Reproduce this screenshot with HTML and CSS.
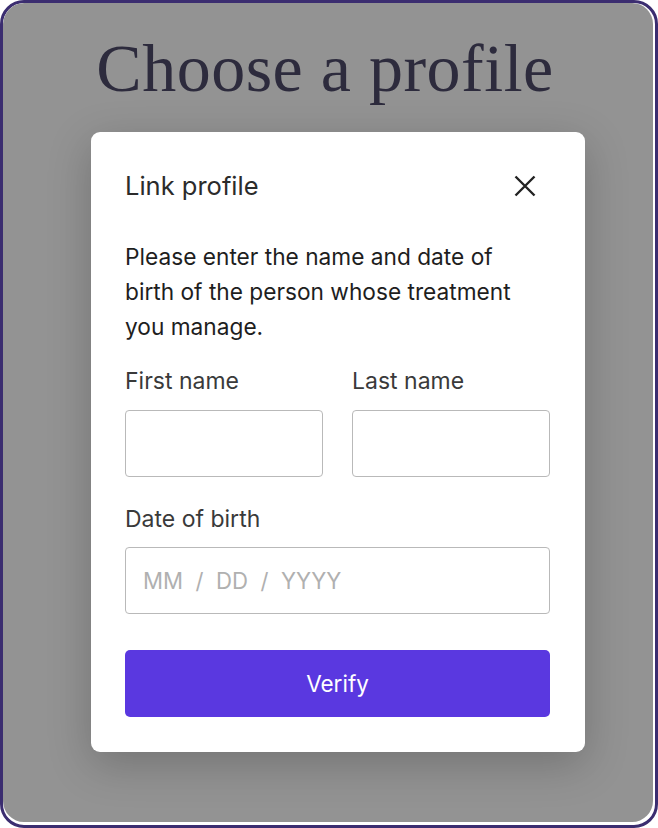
FILE: index.html
```html
<!DOCTYPE html>
<html>
<head>
<meta charset="utf-8">
<link rel="stylesheet" href="styles.css">
</head>
<body>
<div class="frame">
  <div class="overlay">
    <h1 class="title">Choose a profile</h1>
    <div class="modal">
      <div class="modal-head">
        <span class="modal-title">Link profile</span>
        <svg class="close" width="22" height="22" viewBox="0 0 22 22"><path d="M1.5 1.5L20.5 20.5M20.5 1.5L1.5 20.5" stroke="#222" stroke-width="2.4" fill="none"/></svg>
      </div>
      <p class="intro">Please enter the name and date of birth of the person whose treatment you manage.</p>
      <div class="row">
        <div class="field">
          <label class="label">First name</label>
          <div class="input"></div>
        </div>
        <div class="field">
          <label class="label">Last name</label>
          <div class="input"></div>
        </div>
      </div>
      <div class="field dob">
        <label class="label">Date of birth</label>
        <div class="input placeholder">MM&nbsp; /&nbsp; DD&nbsp; /&nbsp; YYYY</div>
      </div>
      <div class="button">Verify</div>
    </div>
  </div>
</div>
</body>
</html>
```
FILE: styles.css
```css
html, body {
  margin: 0;
  padding: 0;
  background: #ffffff;
}
.frame {
  width: 658px;
  height: 828px;
  box-sizing: border-box;
  border: 3px solid #3b2d70;
  border-radius: 24px;
  background: #ffffff;
  overflow: hidden;
}
.overlay {
  width: 650px;
  height: 819px;
  background: #939393;
  border-radius: 21px;
  display: flex;
  flex-direction: column;
  align-items: center;
}
.title {
  margin: 27px 6px 0 0;
  font-family: "Liberation Serif", "DejaVu Serif", serif;
  font-weight: 400;
  font-size: 68px;
  line-height: 76px;
  height: 76px;
  color: #2d2b3d;
  letter-spacing: 0.5px;
}
.modal {
  margin-top: 26px;
  margin-left: 20px;
  width: 494px;
  height: 620px;
  box-sizing: border-box;
  background: #ffffff;
  border-radius: 9px;
  box-shadow: 0 12px 44px rgba(0,0,0,0.22);
  padding: 39px 35px 0 34px;
  font-family: Inter, "Noto Sans", sans-serif;
}
.modal-head {
  display: flex;
  justify-content: space-between;
  align-items: center;
  height: 30px;
}
.modal-title {
  font-size: 25.5px;
  line-height: 30px;
  color: #2b2b2b;
}
.close {
  margin-right: 14px;
}
.intro {
  margin: 38px 0 0 0;
  font-size: 22.7px;
  line-height: 35px;
  color: #1e1e1e;
  width: 412px;
}
.row {
  display: grid;
  grid-template-columns: 198px 198px;
  column-gap: 29px;
  margin-top: 22px;
}
.field {
  display: flex;
  flex-direction: column;
}
.label {
  font-size: 23px;
  line-height: 30px;
  color: #3a3a3a;
  height: 30px;
}
.input {
  margin-top: 14px;
  height: 67px;
  box-sizing: border-box;
  border: 1px solid #b9b9b9;
  border-radius: 4px;
  background: #fff;
}
.dob {
  margin-top: 27px;
}
.dob .input {
  margin-top: 13px;
}
.placeholder {
  width: 425px;
  display: flex;
  align-items: center;
  padding-left: 17px;
  font-size: 22.2px;
  color: #b0b0b0;
}
.button {
  margin-top: 36px;
  width: 425px;
  height: 67px;
  background: #5a38e0;
  border-radius: 5px;
  color: #fff;
  display: flex;
  align-items: center;
  justify-content: center;
  font-size: 22.5px;
}
```
